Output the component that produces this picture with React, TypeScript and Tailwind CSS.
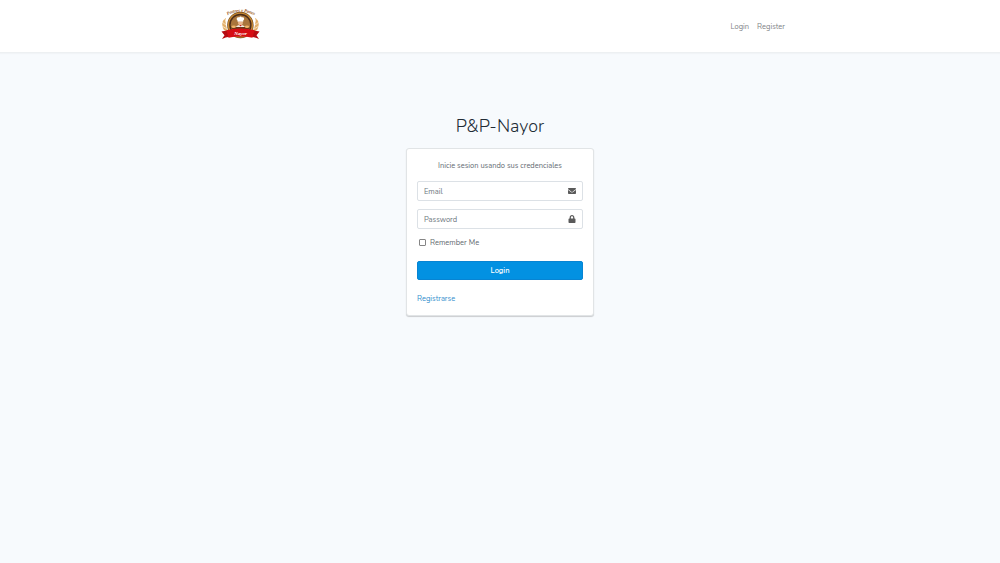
import React from "react";
import { FaEnvelope, FaLock } from "react-icons/fa";

function Logo() {
  return (
    <svg className="h-8 w-10" viewBox="0 0 40 32" role="img" aria-label="Nayor">
      <defs>
        <path id="crest-arc" d="M7.5 7.2 Q20.5 .4 34.5 7.4" />
      </defs>
      <g fill="#e3b06a">
        <path d="M6 10C2 12 1 17 4 22l6 3C6 21 5 15 6 10Z" />
        <path d="M35 10c4 2 5 7 2 12l-6 3c4-4 5-10 4-15Z" />
      </g>
      <g stroke="#fff3df" strokeWidth=".7" fill="none">
        <path d="M2 14l4 3M2 18l5 3M39 14l-4 3M39 18l-5 3M5 11l1 3M36 11l-1 3" />
      </g>
      <circle cx="20.4" cy="17" r="13.2" fill="#704719" />
      <circle cx="20.4" cy="17" r="12.6" fill="#c98a34" />
      <circle cx="20.4" cy="17" r="11.2" fill="#4b2c19" />
      <circle cx="20.4" cy="17" r="9.8" fill="#a9753c" />
      <path d="M17.6 12.5c-2.2-1.8.1-4 1.5-3 .9-1.4 2.4-1 2.8 0 1.9-.8 3.2 1.6 1.3 3v1.2h-5.6Z" fill="#fff" />
      <path d="M18.1 13.7h4.7v2.2q-2.4 2.8-4.7 0Z" fill="#e9b58d" />
      <path d="M15.2 21q.5-4 5.2-4t5.2 4Z" fill="#f4eee7" />
      <path d="M19.2 17h2.6l-1.3 1.4Z" fill="#ca2020" />
      <path d="M11.5 19h17.8v2H11.5Z" fill="#6c3718" />
      <ellipse cx="13.7" cy="18.7" rx="2.2" ry="1.3" fill="#efb368" />
      <ellipse cx="27" cy="18.7" rx="2.2" ry="1.3" fill="#efb368" />
      <path d="M1.5 23.5l8-1.5v6.7q-4 .5-7.5 2.3l2.5-3.7ZM39.5 23.5l-8-1.5v6.7q4 .5 7.5 2.3l-2.5-3.7Z" fill="#b60b12" />
      <path d="M6.5 22.2q14-3.2 28 0l-2 7.6q-12-2.6-24 0Z" fill="#d60d14" />
      <text x="20.6" y="26.6" textAnchor="middle" fontSize="5" fontWeight="700" fontStyle="italic" fontFamily="Liberation Serif, serif" fill="#fff">Nayor</text>
      <text fontSize="4.6" fontWeight="700" fontStyle="italic" fontFamily="Liberation Serif, serif" fill="#985222">
        <textPath href="#crest-arc" textLength="28">Postres y Panes</textPath>
      </text>
    </svg>
  );
}

function Field({ type, label, icon }: { type: string; label: string; icon: React.ReactNode }) {
  return (
    <label className="flex h-5 items-center rounded-[2px] border border-[#dce1e6] bg-white pr-[6px] pl-[6px] text-[#5a5a5a]">
      <input
        type={type}
        placeholder={label}
        className="h-full min-w-0 flex-1 bg-transparent pt-[1px] text-[7.5px] outline-none placeholder:text-[#6c757d]"
      />
      {icon}
    </label>
  );
}

export default function App() {
  return (
    <div className="min-h-screen bg-[#f7fafd] font-['Nunito','Open_Sans',sans-serif] text-[7.5px] leading-[11px] text-[#646b72]">
      <header className="h-[53px] border-b border-[#edf0f2] bg-white shadow-[0_1px_1px_rgba(0,0,0,0.025)]">
        <div className="mx-auto flex h-[52px] w-[570px] items-center justify-between pl-[5px]">
          <a href="#" className="-mt-[4px]"><Logo /></a>
          <nav className="flex gap-2 pt-[1px] text-[#7f8488]">
            <a href="#">Login</a>
            <a href="#">Register</a>
          </nav>
        </div>
      </header>
      <main className="mx-auto w-[188px] pt-[60px]">
        <h1 className="h-[35px] text-center text-[17.9px] leading-[26px] font-light text-[#212b35]">P&amp;P-Nayor</h1>
        <section className="h-[168px] rounded-[3px] border border-[#e1e4e6] bg-white px-[10px] pt-[11px] shadow-[0_1px_1px_rgba(0,0,0,0.18)]">
          <p className="text-center">Inicie sesion usando sus credenciales</p>
          <form className="mt-[10px]">
            <div className="flex flex-col gap-[8px]">
              <Field type="email" label="Email" icon={<FaEnvelope className="size-[8px]" />} />
              <Field type="password" label="Password" icon={<FaLock className="size-[8px]" />} />
            </div>
            <label className="mt-[8px] ml-[2px] flex h-[11px] items-center gap-[4px]">
              <input type="checkbox" className="size-[7px] appearance-none rounded-[1px] border border-[#858585] bg-white" />
              <span>Remember Me</span>
            </label>
            <button type="button" className="mt-[13px] flex h-[19px] w-full items-center justify-center rounded-[2px] border border-[#0784d3] bg-[#0291e2] font-semibold text-white">Login</button>
          </form>
          <a href="#" className="mt-[13px] block text-[#348fcd]">Registrarse</a>
        </section>
      </main>
    </div>
  );
}
